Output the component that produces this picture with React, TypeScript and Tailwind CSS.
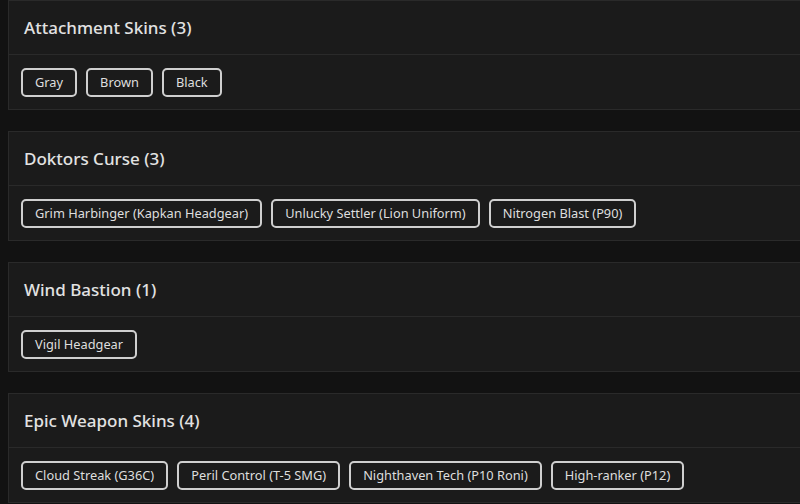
const groups = [
  { title: "Attachment Skins", items: ["Gray", "Brown", "Black"] },
  {
    title: "Doktors Curse",
    items: ["Grim Harbinger (Kapkan Headgear)", "Unlucky Settler (Lion Uniform)", "Nitrogen Blast (P90)"],
  },
  { title: "Wind Bastion", items: ["Vigil Headgear"] },
  {
    title: "Epic Weapon Skins",
    items: ["Cloud Streak (G36C)", "Peril Control (T-5 SMG)", "Nighthaven Tech (P10 Roni)", "High-ranker (P12)"],
  },
];

export default function App() {
  return (
    <div
      className="h-[504px] w-[800px] overflow-hidden bg-[#121212] pl-2"
      style={{ fontFamily: '"Noto Sans", "Open Sans", sans-serif' }}
    >
      {groups.map((g) => (
        <section key={g.title} className="mb-[21px] w-[820px] border border-[#2a2a2a] bg-[#1b1b1b]">
          <div className="flex h-[54px] items-center border-b border-[#2a2a2a] px-[15px]">
            <h2 className="text-[17px] font-medium text-[#e2e2e2]">
              {g.title} ({g.items.length})
            </h2>
          </div>
          <div className="flex h-[54px] items-start gap-[9px] px-3 pt-[13px]">
            {g.items.map((it) => (
              <span
                key={it}
                className="flex h-[29px] items-center rounded-[5px] border-2 border-[#cfcfcf] px-3 text-[12.8px] text-[#dedede]"
              >
                {it}
              </span>
            ))}
          </div>
        </section>
      ))}
    </div>
  );
}
